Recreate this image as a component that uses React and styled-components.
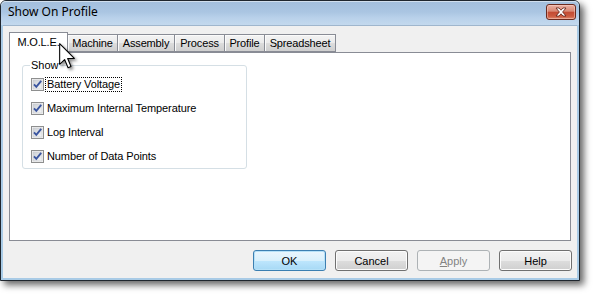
import React from "react";
import styled, { createGlobalStyle } from "styled-components";

const Global = createGlobalStyle`
  html, body { margin: 0; padding: 0; background: #ffffff; }
  body { font-family: "Liberation Sans", Arial, sans-serif; font-size: 11px; color: #000; }
`;

const Stage = styled.div`
  width: 593px;
  height: 294px;
  position: relative;
  overflow: hidden;
`;

const Window = styled.div`
  position: relative;
  width: 580px;
  height: 281px;
  box-sizing: border-box;
  border: 1px solid #1f262e;
  border-radius: 6px 6px 0 0;
  background: #a9cbe6;
  box-shadow: 4px 4px 7px rgba(0, 0, 0, 0.6);
  display: flex;
  flex-direction: column;
  padding: 0 2px 2px 2px;
`;

const TitleBar = styled.div`
  height: 24px;
  margin: 0 -2px;
  padding: 0 3px 0 7px;
  border-radius: 5px 5px 0 0;
  background: linear-gradient(#a3bfdd 0%, #aac5e2 45%, #b9d1ea 70%, #c3d9ee 100%);
  display: flex;
  align-items: center;
  justify-content: space-between;
  box-shadow: inset 0 1px 0 rgba(255, 255, 255, 0.5);
`;

const Title = styled.span`
  font-family: "Noto Sans", "Liberation Sans", sans-serif;
  font-size: 12px;
  color: #000;
  margin-top: -3px;
`;

const CloseButton = styled.div`
  width: 30px;
  height: 16px;
  box-sizing: border-box;
  margin-top: -3px;
  border: 1px solid #6b2a1e;
  border-radius: 3px;
  background: linear-gradient(#eab0a4 0%, #d88873 45%, #c24b33 50%, #cc5a3f 80%, #de8a6e 100%);
  box-shadow: inset 0 0 0 1px rgba(255, 220, 210, 0.45);
  display: flex;
  align-items: center;
  justify-content: center;
`;

const Client = styled.div`
  flex: 1;
  background: #f0f0f0;
  border-top: 1px solid #9fb6cd;
  display: flex;
  flex-direction: column;
  padding: 6px 6px 7px 6px;
  min-height: 0;
`;

const TabStrip = styled.div`
  height: 20px;
  display: flex;
  align-items: flex-end;
  position: relative;
  z-index: 2;
`;

const Tab = styled.div`
  box-sizing: border-box;
  width: ${(p) => p.$w}px;
  height: ${(p) => (p.$active ? "21px" : "18px")};
  margin-bottom: ${(p) => (p.$active ? "-1px" : "0")};
  border: 1px solid #898c95;
  border-bottom: ${(p) => (p.$active ? "none" : "1px solid #898c95")};
  border-left: ${(p) => (p.$first ? "1px solid #898c95" : "none")};
  background: ${(p) =>
    p.$active ? "#ffffff" : "linear-gradient(#f3f3f3 0%, #ebebeb 50%, #dddddd 51%, #cfcfcf 100%)"};
  box-shadow: ${(p) => (p.$active ? "none" : "inset 1px 1px 0 #fbfbfb")};
  display: flex;
  align-items: center;
  justify-content: center;
  padding-bottom: ${(p) => (p.$active ? "2px" : "0")};
  white-space: nowrap;
  font-size: 11px;
  letter-spacing: -0.15px;
`;

const Panel = styled.div`
  flex: 1;
  background: #ffffff;
  border: 1px solid #898c95;
  padding: 6px 0 0 12px;
  position: relative;
  z-index: 1;
`;

const Group = styled.fieldset`
  margin: 0;
  width: 225px;
  box-sizing: border-box;
  border: 1px solid #d5dfe5;
  border-radius: 3px;
  padding: 0 0 0 8px;
`;

const Legend = styled.legend`
  padding: 0 1px;
  margin-left: -1px;
  line-height: 13px;
  font-size: 11px;
  color: #000;
`;

const Row = styled.div`
  height: 24px;
  display: flex;
  align-items: center;
`;

const Label = styled.span`
  margin-left: 1px;
  padding: 0 1px;
  line-height: 13px;
  letter-spacing: -0.1px;
  border: 1px dotted ${(p) => (p.$focus ? "#000" : "transparent")};
`;

const ButtonRow = styled.div`
  display: flex;
  justify-content: flex-end;
  gap: 9px;
  margin-top: 9px;
  margin-right: -1px;
`;

const Button = styled.div`
  width: 73px;
  height: 21px;
  box-sizing: border-box;
  border-radius: 3px;
  display: flex;
  align-items: center;
  justify-content: center;
  font-size: 11px;
  border: 1px solid
    ${(p) => (p.$variant === "default" ? "#3c7fb1" : p.$variant === "disabled" ? "#adb2b5" : "#707070")};
  color: ${(p) => (p.$variant === "disabled" ? "#838383" : "#000")};
  background: ${(p) =>
    p.$variant === "default"
      ? "linear-gradient(#eaf6fd 0%, #d9f0fc 50%, #bee6fd 51%, #a7d9f5 100%)"
      : p.$variant === "disabled"
      ? "#f4f4f4"
      : "linear-gradient(#f2f2f2 0%, #ebebeb 50%, #dddddd 51%, #cfcfcf 100%)"};
  box-shadow: ${(p) =>
    p.$variant === "default"
      ? "inset 0 0 0 1px #b6e1f8"
      : p.$variant === "disabled"
      ? "none"
      : "inset 0 0 0 1px #fcfcfc"};
`;

const Underline = styled.span`
  text-decoration: underline;
`;

const Cursor = styled.svg`
  position: absolute;
  left: 58px;
  top: 42px;
  z-index: 5;
  filter: drop-shadow(2px 2px 1.5px rgba(0, 0, 0, 0.45));
`;

function CheckBox() {
  return (
    <svg width="13" height="13" viewBox="0 0 13 13">
      <defs>
        <linearGradient id="cbg" x1="0" y1="0" x2="1" y2="1">
          <stop offset="0" stopColor="#cbcfd5" />
          <stop offset="1" stopColor="#f6f6f6" />
        </linearGradient>
      </defs>
      <rect x="0.5" y="0.5" width="12" height="12" fill="#f4f4f4" stroke="#8e8f8f" />
      <rect x="2" y="2" width="9" height="9" fill="url(#cbg)" stroke="#c5c8cc" strokeWidth="0.6" />
      <path d="M3 6.3 L5.3 8.8 L10.2 2.8" fill="none" stroke="#3a55a0" strokeWidth="1.9" />
    </svg>
  );
}

const items = [
  { label: "Battery Voltage", focus: true },
  { label: "Maximum Internal Temperature" },
  { label: "Log Interval" },
  { label: "Number of Data Points" },
];

const tabs = [
  { label: "M.O.L.E.", active: true, w: 59 },
  { label: "Machine", w: 50 },
  { label: "Assembly", w: 57 },
  { label: "Process", w: 50 },
  { label: "Profile", w: 40 },
  { label: "Spreadsheet", w: 71 },
];

export default function App() {
  return (
    <Stage>
      <Global />
      <Window>
        <TitleBar>
          <Title>Show On Profile</Title>
          <CloseButton>
            <svg width="14" height="10" viewBox="0 0 14 10">
              <path
                d="M2 1 L5 1 L7 3.2 L9 1 L12 1 L8.6 5 L12 9 L9 9 L7 6.8 L5 9 L2 9 L5.4 5 Z"
                fill="#ffffff"
                stroke="#5b1c12"
                strokeWidth="0.8"
                strokeLinejoin="round"
              />
            </svg>
          </CloseButton>
        </TitleBar>
        <Client>
          <TabStrip>
            {tabs.map((t, i) => (
              <Tab key={t.label} $active={t.active} $first={i === 0} $w={t.w}>
                {t.label}
              </Tab>
            ))}
          </TabStrip>
          <Panel>
            <Group>
              <Legend>Show</Legend>
              {items.map((it) => (
                <Row key={it.label}>
                  <CheckBox />
                  <Label $focus={it.focus}>{it.label}</Label>
                </Row>
              ))}
            </Group>
          </Panel>
          <ButtonRow>
            <Button $variant="default">OK</Button>
            <Button>Cancel</Button>
            <Button $variant="disabled">
              <Underline>A</Underline>pply
            </Button>
            <Button>Help</Button>
          </ButtonRow>
        </Client>
        <Cursor width="16" height="26" viewBox="0 0 12 19.5">
          <path
            d="M0.5 0.5 L0.5 16 L4.2 12.4 L6.8 18.6 L9 17.6 L6.5 11.6 L11.5 11.6 Z"
            fill="#ffffff"
            stroke="#000000"
            strokeWidth="0.8"
            strokeLinejoin="round"
          />
        </Cursor>
      </Window>
    </Stage>
  );
}
